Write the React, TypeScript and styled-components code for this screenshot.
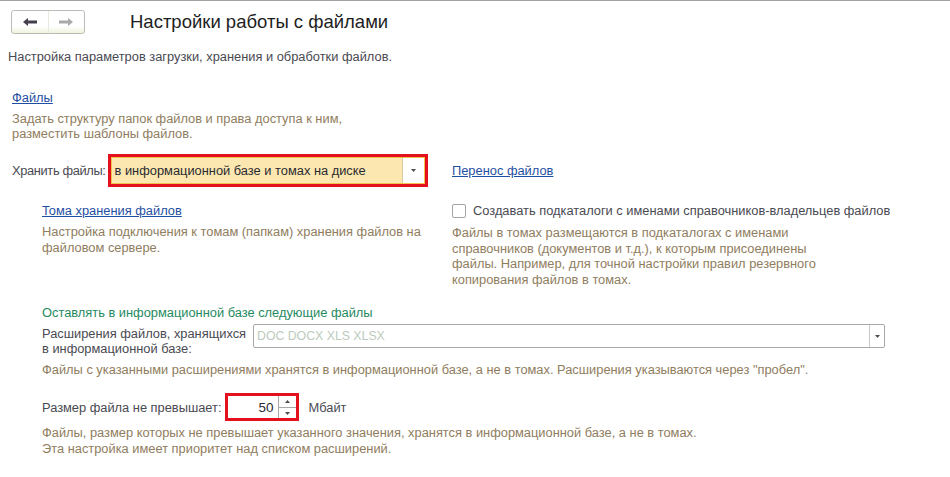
import styled, { createGlobalStyle } from "styled-components";

const GlobalStyle = createGlobalStyle`
  html, body {
    margin: 0;
    padding: 0;
    background: #ffffff;
  }
  body {
    font-family: "Liberation Sans", Arial, sans-serif;
    font-size: 12.85px;
    color: #4a4a52;
  }
`;

const Page = styled.div`
  width: 950px;
  height: 477px;
  box-sizing: border-box;
  border-top: 1px solid #a3a3a3;
  padding: 0 8px;
  overflow: hidden;
`;

const Header = styled.div`
  height: 41px;
  display: flex;
  align-items: center;
  padding-left: 3px;
`;

const NavGroup = styled.div`
  display: flex;
  width: 74px;
  height: 24px;
  box-sizing: border-box;
  border: 1px solid #b9bdb7;
  border-radius: 3px;
  background: linear-gradient(#ffffff 0%, #ffffff 70%, #eef4dc 100%);
`;

const NavButton = styled.div<{ $divider?: boolean }>`
  flex: 1;
  display: flex;
  align-items: center;
  justify-content: center;
  border-right: ${(p) => (p.$divider ? "1px solid #e6ebdf" : "none")};
`;

const Title = styled.h1`
  margin: 0 0 0 45px;
  font-family: "Liberation Sans", Arial, sans-serif;
  font-size: 18.5px;
  font-weight: 400;
  color: #1e1e22;
`;

const Text = styled.div<{ $mt?: number; $lh?: number }>`
  margin-top: ${(p) => p.$mt ?? 0}px;
  line-height: ${(p) => p.$lh ?? 15}px;
`;

const Hint = styled(Text)`
  color: #8f7d5e;
`;

const Link = styled.a<{ $mt?: number }>`
  display: inline-block;
  margin-top: ${(p) => p.$mt ?? 0}px;
  line-height: 15px;
  color: #1f4fa3;
  text-decoration: underline;
  cursor: pointer;
`;

const Indent = styled.div<{ $pl: number }>`
  padding-left: ${(p) => p.$pl}px;
`;

const Columns = styled.div<{ $mt?: number }>`
  display: grid;
  grid-template-columns: 440px 1fr;
  margin-top: ${(p) => p.$mt ?? 0}px;
  padding-left: 4px;
`;

const Cell = styled.div<{ $pl?: number; $center?: boolean }>`
  padding-left: ${(p) => p.$pl ?? 0}px;
  display: flex;
  flex-direction: column;
  justify-content: ${(p) => (p.$center ? "center" : "flex-start")};
`;

const FieldRow = styled.div<{ $mt?: number; $align?: string }>`
  display: flex;
  align-items: ${(p) => p.$align ?? "center"};
  margin-top: ${(p) => p.$mt ?? 0}px;
`;

const Label = styled.span<{ $w?: number; $tight?: boolean }>`
  ${(p) => (p.$w ? `width: ${p.$w}px;` : "")}
  ${(p) => (p.$tight ? "letter-spacing: -0.35px;" : "")}
  line-height: 15px;
  white-space: nowrap;
`;

const RedFrame = styled.div<{ $w: number; $h: number; $ml: number }>`
  width: ${(p) => p.$w}px;
  height: ${(p) => p.$h}px;
  margin-left: ${(p) => p.$ml}px;
  box-sizing: border-box;
  border: 3px solid #e3101e;
  display: flex;
`;

const ChoiceField = styled.div`
  flex: 1;
  display: flex;
  box-sizing: border-box;
  border: 1px solid #f1c34d;
  background: #fce7b1;
`;

const ChoiceValue = styled.div`
  flex: 1;
  padding-left: 3px;
  display: flex;
  align-items: center;
  color: #2b2b2f;
`;

const DropButton = styled.div<{ $w: number }>`
  width: ${(p) => p.$w}px;
  display: flex;
  align-items: center;
  justify-content: center;
  background: #ffffff;
  border-left: 1px solid #d8c9a0;
`;

const ExtInput = styled.div`
  width: 632px;
  height: 24px;
  box-sizing: border-box;
  border: 1px solid #a8a8a8;
  border-radius: 2px;
  display: flex;
  margin-left: 5px;
`;

const Placeholder = styled.div`
  flex: 1;
  padding-left: 3px;
  display: flex;
  align-items: center;
  font-size: 12.3px;
  color: #bccbbd;
`;

const ExtDrop = styled(DropButton)`
  border-left: 1px solid #c9c9c9;
  border-radius: 0 2px 2px 0;
`;

const NumberValue = styled.div`
  flex: 1;
  display: flex;
  align-items: center;
  justify-content: flex-end;
  padding-right: 4px;
  font-size: 13.5px;
  color: #2b2b2f;
  background: #ffffff;
`;

const Spinner = styled.div`
  width: 17px;
  display: flex;
  flex-direction: column;
  border-left: 1px solid #a8a8a8;
`;

const SpinHalf = styled.div<{ $top?: boolean }>`
  flex: 1;
  display: flex;
  align-items: center;
  justify-content: center;
  border-bottom: ${(p) => (p.$top ? "1px solid #a8a8a8" : "none")};
`;

const Unit = styled.span`
  margin-left: 10px;
`;

const CheckBox = styled.span`
  width: 14px;
  height: 14px;
  box-sizing: border-box;
  border: 1px solid #a5a5a5;
  border-radius: 2px;
  background: #ffffff;
  margin-right: 7px;
  flex-shrink: 0;
`;

const GroupTitle = styled.div<{ $mt?: number }>`
  margin-top: ${(p) => p.$mt ?? 0}px;
  line-height: 15px;
  color: #1f8a5f;
`;

const Arrow = ({ dir, color }: { dir: "left" | "right"; color: string }) => (
  <svg width="14" height="8" viewBox="0 0 14 8">
    <path
      fill={color}
      transform={dir === "right" ? "translate(14 0) scale(-1 1)" : undefined}
      d="M0 4 L5 0 L5 2.5 L14 2.5 L14 5.5 L5 5.5 L5 8 Z"
    />
  </svg>
);

const Caret = ({ up }: { up?: boolean }) => (
  <svg width="5" height="3" viewBox="0 0 5 3">
    <path fill="#4d4d4d" d={up ? "M0 3 L2.5 0 L5 3 Z" : "M0 0 L5 0 L2.5 3 Z"} />
  </svg>
);

export default function App() {
  return (
    <>
      <GlobalStyle />
      <Page>
        <Header>
          <NavGroup>
            <NavButton $divider>
              <Arrow dir="left" color="#453f4d" />
            </NavButton>
            <NavButton>
              <Arrow dir="right" color="#a9a9a9" />
            </NavButton>
          </NavGroup>
          <Title>Настройки работы с файлами</Title>
        </Header>

        <Text $mt={7}>Настройка параметров загрузки, хранения и обработки файлов.</Text>

        <Indent $pl={4}>
          <Link $mt={26}>Файлы</Link>
          <Hint $mt={6}>
            Задать структуру папок файлов и права доступа к ним,
            <br />
            разместить шаблоны файлов.
          </Hint>
        </Indent>

        <Columns $mt={13}>
          <Cell>
            <FieldRow>
              <Label $tight>Хранить файлы:</Label>
              <RedFrame $w={320} $h={33} $ml={2}>
                <ChoiceField>
                  <ChoiceValue>в информационной базе и томах на диске</ChoiceValue>
                  <DropButton $w={21}>
                    <Caret />
                  </DropButton>
                </ChoiceField>
              </RedFrame>
            </FieldRow>
          </Cell>
          <Cell $center>
            <div>
              <Link>Перенос файлов</Link>
            </div>
          </Cell>

          <Cell $pl={30}>
            <div>
              <Link $mt={16}>Тома хранения файлов</Link>
            </div>
            <Hint $mt={6} $lh={15.6}>
              Настройка подключения к томам (папкам) хранения файлов на
              <br />
              файловом сервере.
            </Hint>
          </Cell>
          <Cell>
            <FieldRow $mt={16}>
              <CheckBox />
              <Label>Создавать подкаталоги с именами справочников-владельцев файлов</Label>
            </FieldRow>
            <Hint $mt={7} $lh={15.6}>
              Файлы в томах размещаются в подкаталогах с именами
              <br />
              справочников (документов и т.д.), к которым присоединены
              <br />
              файлы. Например, для точной настройки правил резервного
              <br />
              копирования файлов в томах.
            </Hint>
          </Cell>
        </Columns>

        <Indent $pl={34}>
          <GroupTitle $mt={18}>Оставлять в информационной базе следующие файлы</GroupTitle>
          <FieldRow $mt={4} $align="flex-start">
            <Label $w={206} style={{ paddingTop: 2 }}>
              Расширения файлов, хранящихся
              <br />
              в информационной базе:
            </Label>
            <ExtInput>
              <Placeholder>DOC DOCX XLS XLSX</Placeholder>
              <ExtDrop $w={14}>
                <Caret />
              </ExtDrop>
            </ExtInput>
          </FieldRow>
          <Hint $mt={6}>
            Файлы с указанными расширениями хранятся в информационной базе, а не в томах. Расширения указываются через "пробел".
          </Hint>

          <FieldRow $mt={16}>
            <Label>Размер файла не превышает:</Label>
            <RedFrame $w={74} $h={28} $ml={3}>
              <NumberValue>50</NumberValue>
              <Spinner>
                <SpinHalf $top>
                  <Caret up />
                </SpinHalf>
                <SpinHalf>
                  <Caret />
                </SpinHalf>
              </Spinner>
            </RedFrame>
            <Unit>Мбайт</Unit>
          </FieldRow>
          <Hint $mt={4} $lh={16}>
            Файлы, размер которых не превышает указанного значения, хранятся в информационной базе, а не в томах.
            <br />
            Эта настройка имеет приоритет над списком расширений.
          </Hint>
        </Indent>
      </Page>
    </>
  );
}
